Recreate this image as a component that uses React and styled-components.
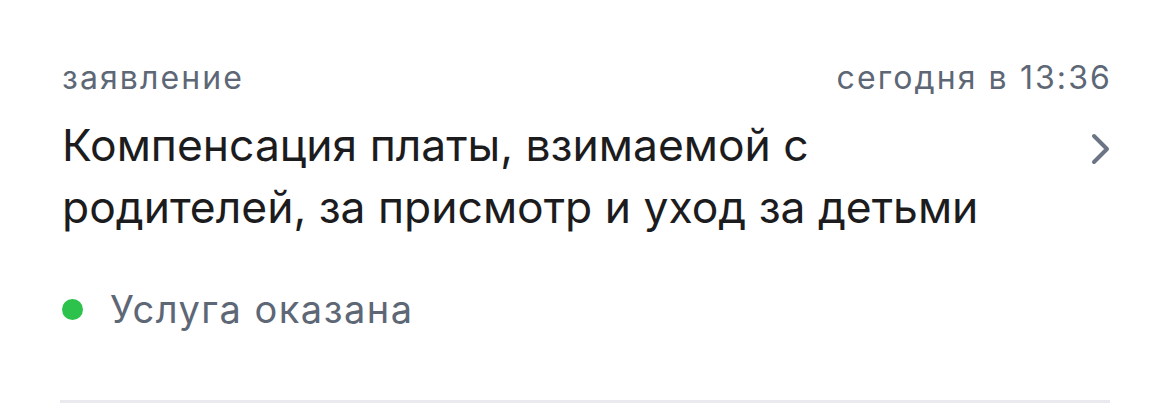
import React from "react";
import styled, { createGlobalStyle } from "styled-components";

const Global = createGlobalStyle`
  html, body { margin: 0; padding: 0; background: #ffffff; }
  body { font-family: Inter, "Noto Sans", sans-serif; -webkit-font-smoothing: antialiased; }
`;

const Card = styled.div`
  width: 1170px;
  height: 412px;
  box-sizing: border-box;
  padding: 56px 60px 0 62px;
  display: flex;
  flex-direction: column;
`;

const Header = styled.div`
  display: flex;
  justify-content: space-between;
  align-items: baseline;
  font-size: 32px;
  line-height: 44px;
  color: #5d6776;
  letter-spacing: 2.1px;
`;

const Meta = styled.span`
  margin-right: ${(p) => (p.$trim ? "-2px" : "0")};
`;

const Body = styled.div`
  display: flex;
  justify-content: space-between;
  align-items: flex-start;
  margin-top: 14px;
`;

const Title = styled.div`
  font-size: 44.4px;
  line-height: 62px;
  color: #1c1c1e;
  letter-spacing: 0;
`;

const Chevron = styled.svg`
  width: 22px;
  height: 34px;
  margin-top: 18px;
  margin-right: -2px;
  flex-shrink: 0;
`;

const Status = styled.div`
  display: flex;
  align-items: center;
  gap: 27px;
  margin-top: 46px;
  font-size: 38px;
  line-height: 50px;
  letter-spacing: 1.5px;
  color: #5d6776;
`;

const Dot = styled.span`
  width: 21px;
  height: 21px;
  border-radius: 50%;
  background: ${(p) => p.color};
  flex-shrink: 0;
`;

const Divider = styled.div`
  height: 3px;
  background: #e9e9ee;
  margin-top: 66px;
  margin-left: -2px;
`;

export default function App() {
  return (
    <>
      <Global />
      <Card>
        <Header>
          <Meta>заявление</Meta>
          <Meta $trim>сегодня в 13:36</Meta>
        </Header>
        <Body>
          <Title>
            Компенсация платы, взимаемой с<br />
            родителей, за присмотр и уход за детьми
          </Title>
          <Chevron viewBox="0 0 22 34" fill="none">
            <path d="M4 4 L17 17 L4 30" stroke="#6b7585" strokeWidth="4" strokeLinecap="round" strokeLinejoin="round" />
          </Chevron>
        </Body>
        <Status>
          <Dot color="#2dc24b" />
          <span>Услуга оказана</span>
        </Status>
        <Divider />
      </Card>
    </>
  );
}
